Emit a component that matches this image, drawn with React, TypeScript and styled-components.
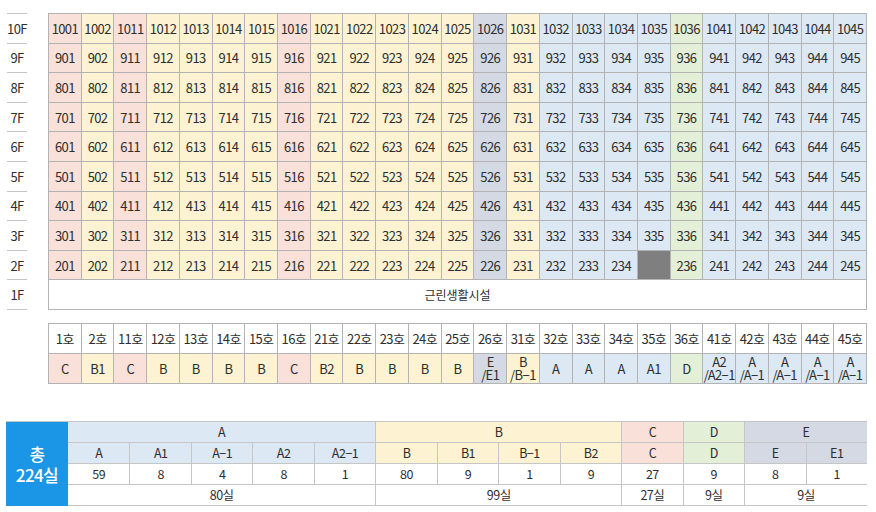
import React from 'react';
import styled, { createGlobalStyle } from 'styled-components';

const Global = createGlobalStyle`
  html, body { margin: 0; padding: 0; background: #fff; }
  body {
    font-family: "Noto Sans CJK KR", "Noto Sans", sans-serif;
    color: #2e2e2e;
  }
`;

type Kind = 'A' | 'B' | 'C' | 'D' | 'E' | 'X' | 'W';
const palette: Record<Kind, string> = {
  A: '#dde8f5',
  B: '#fdf3d2',
  C: '#f9e0d8',
  D: '#e3efd6',
  E: '#d4d9e4',
  X: '#7f7f7f',
  W: '#ffffff',
};

const Page = styled.div`
  width: 876px;
  height: 512px;
  box-sizing: border-box;
  padding-top: 13px;
  display: flex;
  flex-direction: column;
`;

const Building = styled.div`
  display: flex;
  gap: 21px;
  padding-left: 7px;
`;

const FloorCol = styled.div`
  width: 20px;
  display: flex;
  flex-direction: column;
  border-bottom: 1px solid #c4c4c4;
  align-self: flex-start;
`;

const FloorLabel = styled.div`
  height: 29.6px;
  box-sizing: border-box;
  border-top: 1px solid #c4c4c4;
  display: flex;
  align-items: center;
  justify-content: center;
  font-size: 13px;
  letter-spacing: -0.6px;
`;

const Grid = styled.div<{ $rows: number; $h: number }>`
  width: 819px;
  box-sizing: border-box;
  display: grid;
  grid-template-columns: repeat(25, 1fr);
  grid-template-rows: repeat(${(p) => p.$rows}, ${(p) => p.$h}px);
  border-top: 1px solid #b3b3b3;
  border-left: 1px solid #b3b3b3;
`;

const Cell = styled.div<{ $kind: Kind }>`
  box-sizing: border-box;
  border-right: 1px solid #b3b3b3;
  border-bottom: 1px solid #b3b3b3;
  background: ${(p) => palette[p.$kind]};
  display: flex;
  align-items: center;
  justify-content: center;
  text-align: center;
  font-size: 13px;
  line-height: 13px;
  letter-spacing: -0.6px;
  white-space: pre-line;
  color: #2e2e2e;
`;

const Commerce = styled(Cell)`
  grid-column: 1 / -1;
  font-size: 12px;
  letter-spacing: 0;
`;

const TypeSection = styled.div`
  margin: 13px 0 0 48px;
`;

const Summary = styled.div`
  margin: 37px 0 0 6px;
  width: 861px;
  display: grid;
  grid-template-columns: 62px repeat(13, 1fr);
  grid-template-rows: repeat(4, 21px);
  border-top: 1px solid #c6c6c6;
`;

const Total = styled.div`
  grid-row: 1 / span 4;
  background: #1b96e6;
  color: #fff;
  display: flex;
  align-items: center;
  justify-content: center;
  text-align: center;
  white-space: pre-line;
  font-size: 17px;
  line-height: 21px;
  font-weight: 500;
  letter-spacing: -0.6px;
`;

const SumCell = styled.div<{ $kind: Kind; $span?: number; $sep?: boolean }>`
  grid-column: span ${(p) => p.$span ?? 1};
  background: ${(p) => palette[p.$kind]};
  border-bottom: 1px solid #c6c6c6;
  border-left: ${(p) => (p.$sep ? '1px solid #c6c6c6' : 'none')};
  display: flex;
  align-items: center;
  justify-content: center;
  font-size: 12.5px;
  letter-spacing: -0.5px;
  color: #2e2e2e;
`;

const colKinds: Kind[] = [
  'C', 'B', 'C', 'B', 'B', 'B', 'B', 'C', 'B', 'B', 'B', 'B', 'B',
  'E', 'B', 'A', 'A', 'A', 'A', 'D', 'A', 'A', 'A', 'A', 'A',
];
const unitNos = [
  '01', '02', '11', '12', '13', '14', '15', '16', '21', '22', '23', '24', '25',
  '26', '31', '32', '33', '34', '35', '36', '41', '42', '43', '44', '45',
];
const floors = [10, 9, 8, 7, 6, 5, 4, 3, 2];

const types = [
  'C', 'B1', 'C', 'B', 'B', 'B', 'B', 'C', 'B2', 'B', 'B', 'B', 'B',
  'E\n/E1', 'B\n/B−1', 'A', 'A', 'A', 'A1', 'D', 'A2\n/A2−1', 'A\n/A−1', 'A\n/A−1', 'A\n/A−1', 'A\n/A−1',
];

type Group = { name: string; kind: Kind; subs: [string, string][]; total: string };
const groups: Group[] = [
  { name: 'A', kind: 'A', subs: [['A', '59'], ['A1', '8'], ['A−1', '4'], ['A2', '8'], ['A2−1', '1']], total: '80실' },
  { name: 'B', kind: 'B', subs: [['B', '80'], ['B1', '9'], ['B−1', '1'], ['B2', '9']], total: '99실' },
  { name: 'C', kind: 'C', subs: [['C', '27']], total: '27실' },
  { name: 'D', kind: 'D', subs: [['D', '9']], total: '9실' },
  { name: 'E', kind: 'E', subs: [['E', '8'], ['E1', '1']], total: '9실' },
];

export default function App() {
  return (
    <Page>
      <Global />
      <Building>
        <FloorCol>
          {floors.map((f) => (
            <FloorLabel key={f}>{f}F</FloorLabel>
          ))}
          <FloorLabel>1F</FloorLabel>
        </FloorCol>
        <Grid $rows={10} $h={29.6}>
          {floors.map((f) =>
            unitNos.map((u, i) => {
              const blocked = f === 2 && u === '35';
              return (
                <Cell key={`${f}-${u}`} $kind={blocked ? 'X' : colKinds[i]}>
                  {blocked ? '' : `${f}${u}`}
                </Cell>
              );
            })
          )}
          <Commerce $kind="W">근린생활시설</Commerce>
        </Grid>
      </Building>

      <TypeSection>
        <Grid $rows={2} $h={30}>
          {unitNos.map((u) => (
            <Cell key={`h${u}`} $kind="W">{`${parseInt(u, 10)}호`}</Cell>
          ))}
          {types.map((t, i) => (
            <Cell key={`t${i}`} $kind={colKinds[i]}>{t}</Cell>
          ))}
        </Grid>
      </TypeSection>

      <Summary>
        <Total>{'총\n224실'}</Total>
        {groups.map((g) => (
          <SumCell key={`g${g.name}`} $kind={g.kind} $span={g.subs.length} $sep={g.name !== 'A'}>
            {g.name}
          </SumCell>
        ))}
        {groups.map((g) =>
          g.subs.map(([s], i) => (
            <SumCell key={`s${g.name}${s}`} $kind={g.kind} $sep={!(g.name === 'A' && i === 0)}>
              {s}
            </SumCell>
          ))
        )}
        {groups.map((g) =>
          g.subs.map(([s, n], i) => (
            <SumCell key={`n${g.name}${s}`} $kind="W" $sep={!(g.name === 'A' && i === 0)}>
              {n}
            </SumCell>
          ))
        )}
        {groups.map((g) => (
          <SumCell key={`t${g.name}`} $kind="W" $span={g.subs.length} $sep={g.name !== 'A'}>
            {g.total}
          </SumCell>
        ))}
      </Summary>
    </Page>
  );
}
